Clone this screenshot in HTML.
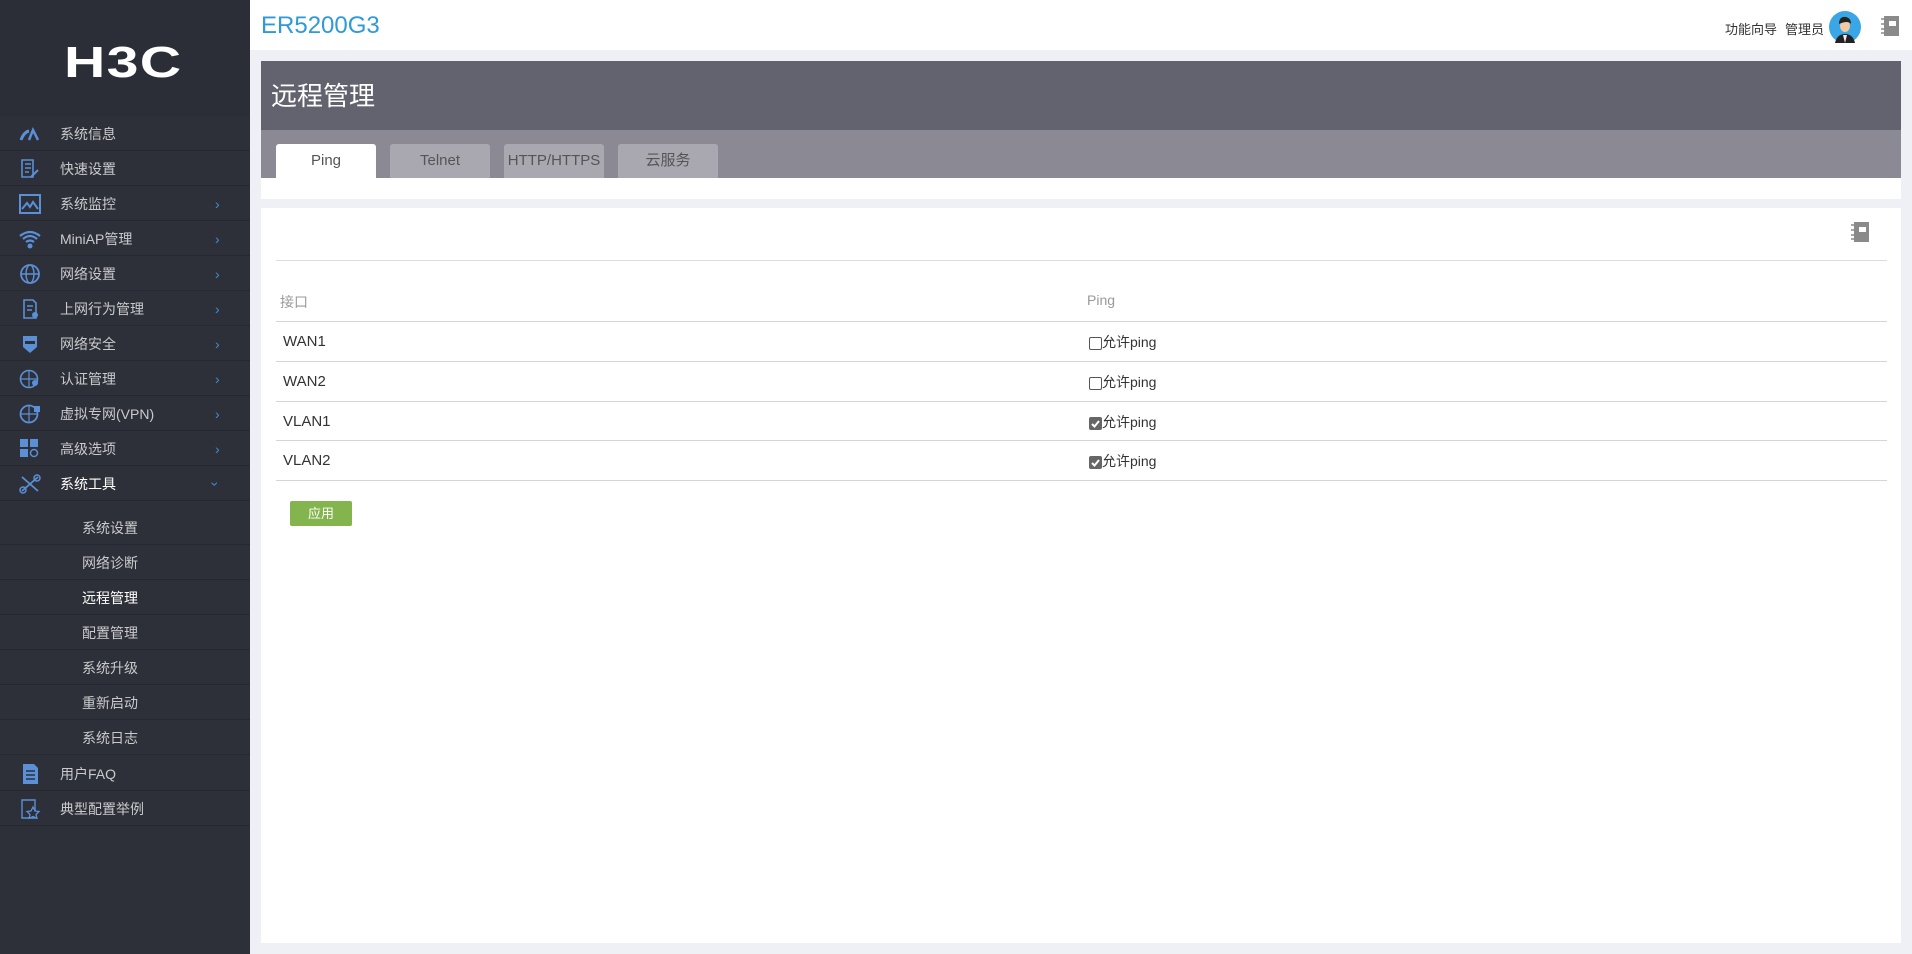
<!DOCTYPE html>
<html><head><meta charset="utf-8">
<style>
*{margin:0;padding:0;box-sizing:border-box}
body{width:1912px;height:954px;overflow:hidden;background:#eef0f6;font-family:"Liberation Sans","Noto Sans CJK SC",sans-serif;position:relative}
#side{position:absolute;left:0;top:0;width:250px;height:954px;background:#2d3038}
#side .top{position:absolute;left:0;top:0;width:250px;height:116px;background:#2b2e36}
.logo{position:absolute;left:64px;top:38px;color:#fff;font-size:44px;font-weight:bold;letter-spacing:1px;font-family:"Liberation Sans",sans-serif;transform:scaleX(1.3);transform-origin:left}
.mi{position:absolute;left:0;width:250px;height:35px;border-bottom:1px solid #262830;color:#c9cacd;font-size:14px;line-height:36px}
.mi .t{position:absolute;left:60px}
.mi .ic{position:absolute;left:19px;top:8px;width:22px;height:20px}
.mi .ch{position:absolute;left:215px;top:0;color:#3f8fd8;font-size:14px}
.sub .t{left:82px}
.hdr{position:absolute;left:250px;top:0;width:1662px;height:50px;background:#fff}
.hdr .ti{position:absolute;left:11px;top:12px;font-size:24px;color:#2e9ad8}
.hdr .r{position:absolute;top:19px;font-size:13px;color:#333}
.p1{position:absolute;left:261px;top:61px;width:1640px;height:69px;background:#62636f}
.p1 span{position:absolute;left:10px;top:15px;color:#fff;font-size:26px}
.p2{position:absolute;left:261px;top:130px;width:1640px;height:48px;background:#8b8a94}
.tab{position:absolute;top:14px;width:100px;height:34px;background:#a9a8b1;border-radius:3px 3px 0 0;text-align:center;line-height:34px;font-size:15px;color:#555}
.p3{position:absolute;left:261px;top:178px;width:1640px;height:21px;background:#fff}
.main{position:absolute;left:261px;top:208px;width:1640px;height:735px;background:#fff}
.hl{position:absolute;left:15px;width:1611px;height:1px;background:#d5d5d5}
.c{position:absolute;font-size:15px;color:#333}
.cb{position:absolute;left:828px;width:13px;height:13px;border:1px solid #555;border-radius:2px;background:#fff}
.cb.on{background:#666;border-color:#666}
</style></head><body>
<div id="side">
<div class="top"></div>
<div class="logo">H3C</div>

<div class="mi" style="top:116px"><svg class="ic" viewBox="0 0 22 20"><path d="M2 16 Q5 8 10 7" stroke="#5b8fd6" stroke-width="3" fill="none"/><path d="M10 16 L14 6 L19 16" stroke="#5b8fd6" stroke-width="2.5" fill="none"/></svg><span class="t">系统信息</span></div>
<div class="mi" style="top:151px"><svg class="ic" viewBox="0 0 22 20"><path d="M3 1h11v17H3z M6 5h6 M6 9h6 M6 13h4" stroke="#5b8fd6" stroke-width="1.6" fill="none"/><path d="M12 18l7-7" stroke="#5b8fd6" stroke-width="2"/></svg><span class="t">快速设置</span></div>
<div class="mi" style="top:186px"><svg class="ic" viewBox="0 0 22 20"><rect x="1" y="1" width="20" height="18" fill="none" stroke="#5b8fd6" stroke-width="2"/><path d="M3 15l5-6 3 4 3-5 5 7" stroke="#5b8fd6" stroke-width="2" fill="none"/></svg><span class="t">系统监控</span><span class="ch">›</span></div>
<div class="mi" style="top:221px"><svg class="ic" viewBox="0 0 22 20"><path d="M1 7Q11-1 21 7M4 10Q11 4 18 10M7 13Q11 10 15 13" stroke="#5b8fd6" stroke-width="2.2" fill="none"/><circle cx="11" cy="17" r="2.5" fill="#5b8fd6"/></svg><span class="t">MiniAP管理</span><span class="ch">›</span></div>
<div class="mi" style="top:256px"><svg class="ic" viewBox="0 0 22 20"><circle cx="11" cy="10" r="9" fill="none" stroke="#5b8fd6" stroke-width="1.8"/><ellipse cx="11" cy="10" rx="4" ry="9" fill="none" stroke="#5b8fd6" stroke-width="1.5"/><path d="M2 10h18" stroke="#5b8fd6" stroke-width="1.5"/></svg><span class="t">网络设置</span><span class="ch">›</span></div>
<div class="mi" style="top:291px"><svg class="ic" viewBox="0 0 22 20"><path d="M5 1h9l3 3v15H5z M8 7h6 M8 11h5" stroke="#5b8fd6" stroke-width="1.6" fill="none"/><circle cx="16" cy="16" r="3" fill="#5b8fd6"/></svg><span class="t">上网行为管理</span><span class="ch">›</span></div>
<div class="mi" style="top:326px"><svg class="ic" viewBox="0 0 22 20"><path d="M4 2h14v11l-7 6-7-6z" fill="#5b8fd6"/><rect x="6" y="7" width="10" height="3" fill="#2d3038"/></svg><span class="t">网络安全</span><span class="ch">›</span></div>
<div class="mi" style="top:361px"><svg class="ic" viewBox="0 0 22 20"><circle cx="10" cy="10" r="8.5" fill="none" stroke="#5b8fd6" stroke-width="1.6"/><path d="M2 10h16M10 2v16" stroke="#5b8fd6" stroke-width="1.2"/><circle cx="16" cy="14" r="3" fill="#5b8fd6"/></svg><span class="t">认证管理</span><span class="ch">›</span></div>
<div class="mi" style="top:396px"><svg class="ic" viewBox="0 0 22 20"><circle cx="10" cy="10" r="8.5" fill="none" stroke="#5b8fd6" stroke-width="1.8"/><path d="M2 10h16M10 2v16" stroke="#5b8fd6" stroke-width="1.2"/><rect x="15" y="2" width="6" height="6" fill="#5b8fd6"/></svg><span class="t">虚拟专网(VPN)</span><span class="ch">›</span></div>
<div class="mi" style="top:431px"><svg class="ic" viewBox="0 0 22 20"><rect x="1" y="0" width="8" height="8" fill="#5b8fd6"/><rect x="11" y="0" width="8" height="8" fill="#5b8fd6"/><rect x="1" y="10" width="8" height="8" fill="#5b8fd6"/><circle cx="15" cy="14" r="3.5" fill="none" stroke="#5b8fd6" stroke-width="1.5"/></svg><span class="t">高级选项</span><span class="ch">›</span></div>
<div class="mi" style="top:466px;color:#fff"><svg class="ic" viewBox="0 0 22 20"><path d="M3 3l16 14M19 3L3 17" stroke="#5b8fd6" stroke-width="1.8"/><circle cx="4" cy="16" r="3" fill="none" stroke="#5b8fd6" stroke-width="1.5"/><circle cx="18" cy="4" r="3" fill="none" stroke="#5b8fd6" stroke-width="1.5"/></svg><span class="t">系统工具</span><span class="ch" style="transform:rotate(90deg);left:213px">›</span></div>
<div class="mi sub" style="top:510px"><span class="t">系统设置</span></div>
<div class="mi sub" style="top:545px"><span class="t">网络诊断</span></div>
<div class="mi sub" style="top:580px;color:#fff"><span class="t">远程管理</span></div>
<div class="mi sub" style="top:615px"><span class="t">配置管理</span></div>
<div class="mi sub" style="top:650px"><span class="t">系统升级</span></div>
<div class="mi sub" style="top:685px"><span class="t">重新启动</span></div>
<div class="mi sub" style="top:720px"><span class="t">系统日志</span></div>
<div class="mi" style="top:756px"><svg class="ic" viewBox="0 0 22 20"><path d="M4 0h11l4 4v16H4z" fill="#5b8fd6"/><path d="M7 7h9M7 11h9M7 15h9" stroke="#2d3038" stroke-width="1.6"/></svg><span class="t">用户FAQ</span></div>
<div class="mi" style="top:791px"><svg class="ic" viewBox="0 0 22 20"><path d="M3 1h13v18H3z" stroke="#5b8fd6" stroke-width="1.4" fill="none"/><path d="M14 8l2 4 4 .5-3 3 1 4-4-2-4 2 1-4-3-3 4-.5z" fill="#2d3038" stroke="#5b8fd6" stroke-width="1.3"/></svg><span class="t">典型配置举例</span></div>
</div>

<div class="hdr"><span class="ti">ER5200G3</span>
<span class="r" style="left:1475px">功能向导</span><span class="r" style="left:1535px">管理员</span>
<svg style="position:absolute;left:1579px;top:11px" width="32" height="32" viewBox="0 0 32 32"><circle cx="16" cy="16" r="16" fill="#3aa6e6"/><path d="M6 32q2-9 10-9t10 9z" fill="#222"/><ellipse cx="16" cy="15" rx="5" ry="6" fill="#f2c9a0"/><path d="M10 13q0-8 7-7 5 1 5 7-3-4-12 0z" fill="#222"/><path d="M14 24l2 8 2-8z" fill="#eee"/></svg>
<svg style="position:absolute;left:1630px;top:16px" width="20" height="20" viewBox="0 0 20 20"><rect x="4" y="0" width="15" height="20" fill="#8a8a8a"/><rect x="9" y="5" width="7" height="5" fill="#fff"/><path d="M1 3h5M1 8h5M1 13h5M1 17h5" stroke="#8a8a8a" stroke-width="1.5"/></svg>
</div>

<div class="p1"><span>远程管理</span></div>
<div class="p2">
<div class="tab" style="left:15px;background:#fff">Ping</div>
<div class="tab" style="left:129px">Telnet</div>
<div class="tab" style="left:243px">HTTP/HTTPS</div>
<div class="tab" style="left:357px">云服务</div>
</div>
<div class="p3"></div>
<div class="main">
<svg style="position:absolute;left:1589px;top:14px" width="20" height="20" viewBox="0 0 20 20"><rect x="4" y="0" width="15" height="20" fill="#8a8a8a"/><rect x="9" y="5" width="7" height="5" fill="#fff"/><path d="M1 3h5M1 8h5M1 13h5M1 17h5" stroke="#8a8a8a" stroke-width="1.5"/></svg>
<div class="hl" style="top:52px;background:#ddd"></div>
<div class="c" style="left:19px;top:84px;color:#999;font-size:14px">接口</div>
<div class="c" style="left:826px;top:84px;color:#999;font-size:14px">Ping</div>
<div class="hl" style="top:113px"></div>
<div class="c" style="left:22px;top:125px">WAN1</div><div class="cb" style="top:129px"></div><div class="c" style="left:841px;top:124px;font-size:14px">允许ping</div>
<div class="hl" style="top:153px"></div>
<div class="c" style="left:22px;top:165px">WAN2</div><div class="cb" style="top:169px"></div><div class="c" style="left:841px;top:164px;font-size:14px">允许ping</div>
<div class="hl" style="top:193px"></div>
<div class="c" style="left:22px;top:205px">VLAN1</div><div class="cb on" style="top:209px"><svg width="11" height="11" viewBox="0 0 11 11" style="position:absolute;left:0;top:0"><path d="M2 6l2.5 2.5L9 3" stroke="#fff" stroke-width="2" fill="none"/></svg></div><div class="c" style="left:841px;top:204px;font-size:14px">允许ping</div>
<div class="hl" style="top:232px"></div>
<div class="c" style="left:22px;top:244px">VLAN2</div><div class="cb on" style="top:248px"><svg width="11" height="11" viewBox="0 0 11 11" style="position:absolute;left:0;top:0"><path d="M2 6l2.5 2.5L9 3" stroke="#fff" stroke-width="2" fill="none"/></svg></div><div class="c" style="left:841px;top:243px;font-size:14px">允许ping</div>
<div class="hl" style="top:272px"></div>
<div style="position:absolute;left:29px;top:293px;width:62px;height:25px;background:#84b44d;border-radius:2px;color:#fff;font-size:13px;text-align:center;line-height:25px">应用</div>
</div>
</body></html>
